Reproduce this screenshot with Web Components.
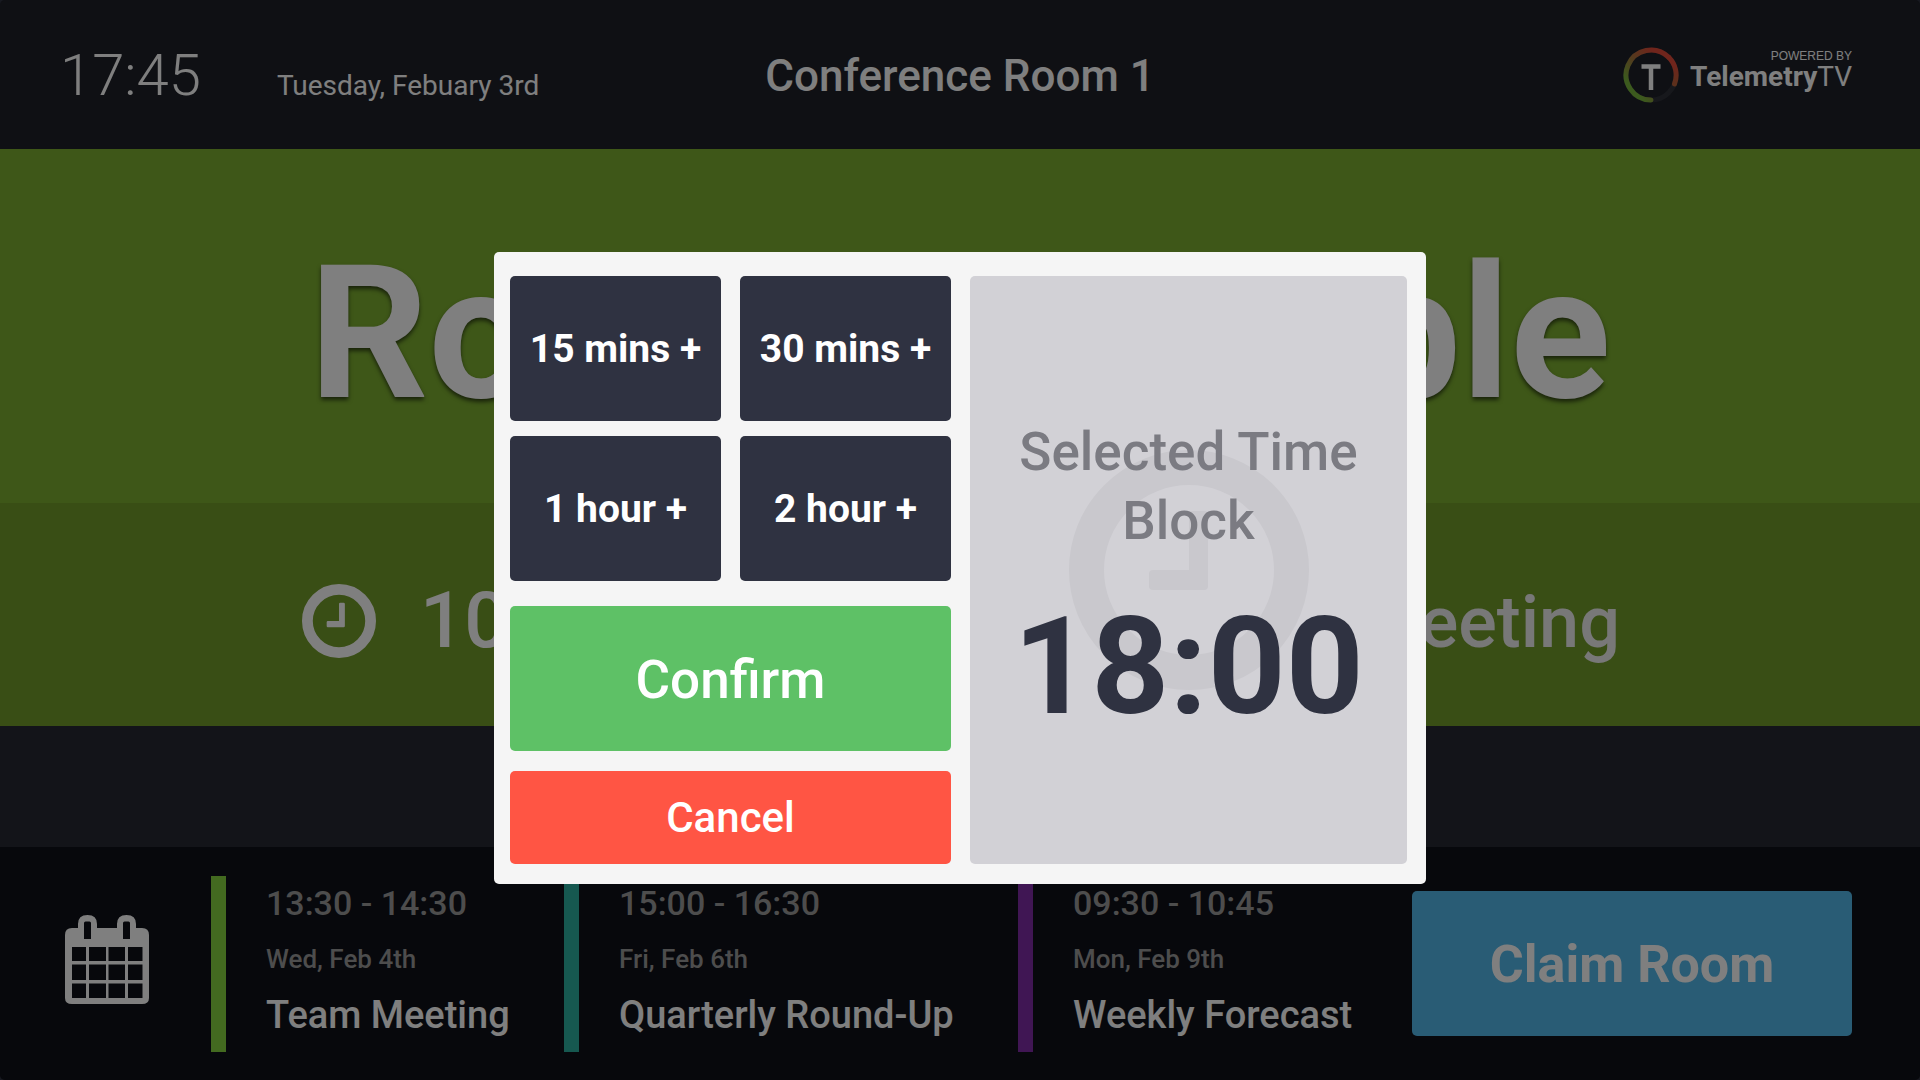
<!DOCTYPE html>
<html lang="en">
<head>
<meta charset="utf-8">
<title>Conference Room 1</title>
<style>
  html, body { margin: 0; height: 100%; background: #2f3241; }
  body { font-family: Roboto, "Open Sans", "Liberation Sans", sans-serif; color: #fff; }
</style>
</head>
<body>
<room-display>
  <room-header slot="header" time="17:45" date="Tuesday, Febuary 3rd" room="Conference Room 1"></room-header>
  <room-status slot="status">Room Available</room-status>
  <next-meeting slot="next" countdown="10 Minutes">Until Next Meeting</next-meeting>
  <agenda-bar slot="agenda">
    <agenda-item time="13:30 - 14:30" date="Wed, Feb 4th" style="--accent:#86d440">Team Meeting</agenda-item>
    <agenda-item time="15:00 - 16:30" date="Fri, Feb 6th" style="--accent:#2cb0a0">Quarterly Round-Up</agenda-item>
    <agenda-item time="09:30 - 10:45" date="Mon, Feb 9th" style="--accent:#802ca8">Weekly Forecast</agenda-item>
  </agenda-bar>
</room-display>
<time-picker-modal>
  <time-button slot="times">15 mins +</time-button>
  <time-button slot="times">30 mins +</time-button>
  <time-button slot="times">1 hour +</time-button>
  <time-button slot="times">2 hour +</time-button>
  <selected-time slot="selected" value="18:00">Selected Time Block</selected-time>
</time-picker-modal>

<script>
  const define = (name, render) => customElements.define(name, class extends HTMLElement {
    connectedCallback() {
      if (this.shadowRoot) return;
      this.attachShadow({ mode: 'open' }).innerHTML = render(this);
    }
  });
  const attr = (el, name) => el.getAttribute(name) || '';

  define('room-display', () => `
    <style>
      :host { display: flex; flex-direction: column; min-height: 100vh; border-radius: 5px; overflow: hidden; background: #262832; }
      .agenda { margin-top: auto; }
    </style>
    <slot name="header"></slot>
    <main><slot name="status"></slot><slot name="next"></slot></main>
    <div class="agenda"><slot name="agenda"></slot></div>`);

  define('brand-logo', () => `
    <style>
      :host { display: flex; align-items: center; gap: 11px; }
      svg { width: 56px; height: 56px; }
      .words { display: flex; flex-direction: column; align-items: flex-end; padding-bottom: 10px; }
      .powered { font: 12px/14px "Liberation Sans", sans-serif; }
      .name { font-size: 28px; line-height: 28px; font-weight: 700; }
      .name span { font-weight: 400; }
    </style>
    <svg viewBox="0 0 56 56" fill="none" stroke-width="5" aria-hidden="true">
      <defs>
        <linearGradient id="a" x1="0" y1="1" x2="1" y2="0">
          <stop offset=".2" stop-color="#78b43c"/><stop offset=".5" stop-color="#a8743c"/><stop offset=".8" stop-color="#e04a38"/>
        </linearGradient>
        <linearGradient id="b" x1="0" y1="0" x2="0" y2="1">
          <stop offset=".3" stop-color="#e04a38"/><stop offset="1" stop-color="#b86038"/>
        </linearGradient>
      </defs>
      <circle cx="28" cy="28" r="25" stroke="#2e3038"/>
      <path d="M28 53A25 25 0 1 1 45.7 10.3" stroke="url(#a)" stroke-linecap="round"/>
      <path d="M45.7 10.3A25 25 0 0 1 51.5 37" stroke="url(#b)" stroke-linecap="round"/>
      <path d="M18.500 19.500H37.500M28 19V43" stroke="#fff" stroke-width="4.500"/>
    </svg>
    <div class="words">
      <span class="powered">POWERED BY</span>
      <span class="name">Telemetry<span>TV</span></span>
    </div>`);

  define('room-header', el => `
    <style>
      :host { display: block; background: #1e2028; }
      header { display: grid; grid-template-columns: 1fr auto 1fr; align-items: center; height: 149px; padding: 0 68px 0 60px; }
      .when { display: flex; align-items: baseline; gap: 76px; }
      .time { font-size: 58px; font-weight: 300; }
      .date { font-size: 28px; }
      h1 { margin: 0; padding: 2px 0 0 8px; font-size: 44px; font-weight: 500; }
      brand-logo { justify-self: end; }
    </style>
    <header>
      <div class="when"><time class="time">${attr(el, 'time')}</time><time class="date">${attr(el, 'date')}</time></div>
      <h1>${attr(el, 'room')}</h1>
      <brand-logo></brand-logo>
    </header>`);

  define('room-status', () => `
    <style>
      :host { display: flex; align-items: center; justify-content: center; box-sizing: border-box; height: 354px; padding-top: 14px;
        background: #7cae30; font-size: 186px; line-height: 220px; font-weight: 700; white-space: nowrap; text-shadow: 0 3px 4px rgba(0,0,0,.6); }
    </style>
    <slot></slot>`);

  define('clock-icon', () => `
    <style>
      :host { display: block; }
      svg { display: block; width: 100%; height: 100%; }
    </style>
    <svg viewBox="0 0 240 240" aria-hidden="true">
      <circle cx="120" cy="120" r="102.500" fill="none" stroke="currentColor" stroke-width="35"/>
      <path d="M124 61H135Q139 61 139 65V136Q139 140 135 140H84Q80 140 80 136V124Q80 120 84 120H120V65Q120 61 124 61Z" fill="currentColor"/>
    </svg>`);

  define('next-meeting', el => `
    <style>
      :host { display: flex; align-items: baseline; gap: 44px; box-sizing: border-box; height: 223px;
        padding: 12px 300px 0 302px; background: #729c2a; font-size: 78px; line-height: 211px; font-weight: 500; white-space: nowrap; }
      clock-icon { align-self: center; width: 74px; height: 74px; }
      .label { margin-left: auto; color: #f0f0f0; font-size: 72px; }
    </style>
    <clock-icon></clock-icon>
    <span>${attr(el, 'countdown')}</span>
    <span class="label"><slot></slot></span>`);

  define('calendar-icon', () => `
    <style>
      :host { display: block; width: 84px; height: 90px; }
      svg { display: block; }
    </style>
    <svg width="84" height="90" viewBox="0 0 84 90" fill="#fff" fill-rule="evenodd" aria-hidden="true">
      <path d="M7 13H13V9Q13 0 22.500 0T32 9V13H52V9Q52 0 61.500 0T71 9V13H77Q84 13 84 20V83Q84 89 77 89H7Q0 89 0 83V20Q0 13 7 13Z
        M20.500 6.500Q19 6.500 19 8V24H26V8Q26 6.500 24.500 6.500ZM59.500 6.500Q58 6.500 58 8V24H65V8Q65 6.500 63.500 6.500Z
        M7 32H21V46H7ZM24 32H41V46H24ZM43.500 32H60V46H43.500ZM63 32H77.500V46H63Z
        M7 49.500H21V65H7ZM24 49.500H41V65H24ZM43.500 49.500H60V65H43.500ZM63 49.500H77.500V65H63Z
        M7 68.500H21V83H7ZM24 68.500H41V83H24ZM43.500 68.500H60V83H43.500ZM63 68.500H77.500V83H63Z"/>
    </svg>`);

  define('agenda-item', el => `
    <style>
      :host { display: flex; flex-direction: column; align-items: flex-start; box-sizing: border-box; height: 176px; padding: 7px 0 0 40px;
        border-left: 15px solid var(--accent); white-space: nowrap; font-weight: 500; }
      time { color: #9a9a9a; }
      .time { font-size: 34px; line-height: 40px; margin-bottom: 19px; }
      .date { font-size: 26px; line-height: 34px; margin-bottom: 16px; }
      h2 { margin: 0; font-size: 38px; line-height: 46px; font-weight: 500; }
    </style>
    <time class="time">${attr(el, 'time')}</time>
    <time class="date">${attr(el, 'date')}</time>
    <h2><slot></slot></h2>`);

  define('agenda-bar', () => `
    <style>
      :host { display: block; background: #0e1018; }
      footer { display: grid; grid-template-columns: 146px 353fr 454fr 394fr 440px; align-items: center; height: 233px; padding: 0 68px 0 65px; box-sizing: border-box; }
      calendar-icon { padding-bottom: 8px; }
      button { height: 145px; padding: 2px 0 0; border: 0; border-radius: 5px; background: #52b8ea; color: #fff; font: 700 52px/64px Roboto, "Open Sans", sans-serif; }
    </style>
    <footer>
      <calendar-icon></calendar-icon>
      <slot></slot>
      <button type="button">Claim Room</button>
    </footer>`);

  define('time-button', () => `
    <style>
      :host { display: block; }
      button { display: block; width: 100%; height: 145px; padding: 0; border: 0; border-radius: 5px; background: #2f3241; color: #fff;
        font: 700 39px/46px Roboto, "Open Sans", sans-serif; }
    </style>
    <button type="button"><slot></slot></button>`);

  define('selected-time', el => `
    <style>
      :host { display: grid; place-items: center; height: 100%; border-radius: 5px; background: #d2d1d6; text-align: center; }
      clock-icon, .text { grid-area: 1 / 1; }
      clock-icon { width: 240px; height: 240px; color: #c9c8cd; }
      .text { z-index: 1; padding: 24px 40px 0; }
      .label { color: #7b7b82; font-size: 53px; line-height: 69px; font-weight: 500; }
      output { display: block; color: #2f3241; font-size: 136px; line-height: 160px; font-weight: 700; margin-top: 31px; }
    </style>
    <clock-icon></clock-icon>
    <div class="text">
      <div class="label"><slot></slot></div>
      <output>${attr(el, 'value')}</output>
    </div>`);

  define('time-picker-modal', () => `
    <style>
      :host { position: fixed; inset: 0; display: grid; place-items: center; padding-top: 56px; background: rgba(0,0,0,.5); }
      section { display: grid; grid-template-columns: 441px 437px; column-gap: 19px; padding: 24px 19px 20px 16px; border-radius: 5px; background: #f5f5f5; }
      .times { display: grid; grid-template-columns: 1fr 1fr; gap: 15px 19px; }
      .actions { display: grid; gap: 20px; margin-top: 25px; }
      button { border: 0; border-radius: 5px; color: #fff; font-family: Roboto, "Open Sans", sans-serif; font-weight: 500; }
      .confirm { height: 145px; padding: 2px 0 0; background: #5ec166; font-size: 53px; }
      .cancel { height: 93px; padding: 0; background: #ff5544; font-size: 42px; }
    </style>
    <section role="dialog" aria-modal="true" aria-label="Select a time block">
      <div>
        <div class="times"><slot name="times"></slot></div>
        <div class="actions">
          <button type="button" class="confirm">Confirm</button>
          <button type="button" class="cancel">Cancel</button>
        </div>
      </div>
      <slot name="selected"></slot>
    </section>`);
</script>
</body>
</html>
